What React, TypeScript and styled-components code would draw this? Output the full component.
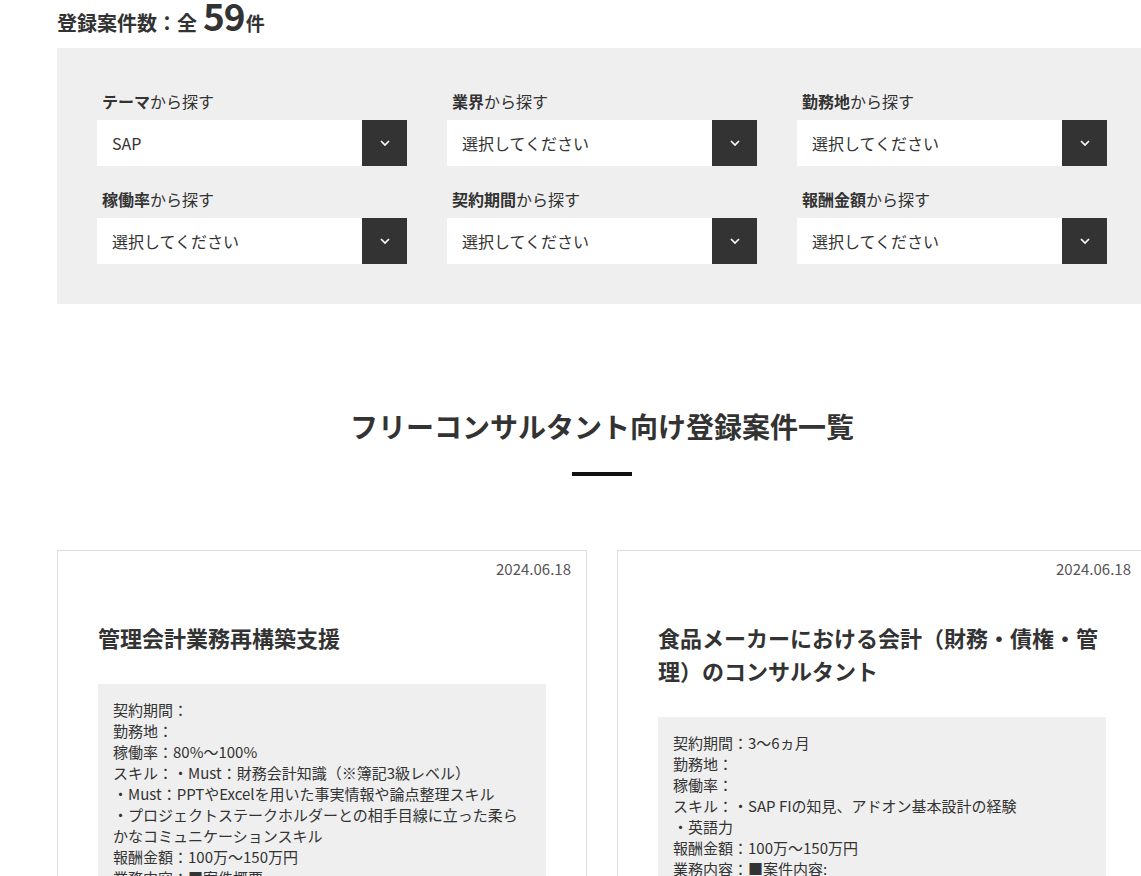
import React from "react";
import styled, { createGlobalStyle } from "styled-components";

const Global = createGlobalStyle`
  html, body { margin: 0; padding: 0; overflow-x: hidden; background: #fff; }
  body {
    font-family: "Noto Sans CJK JP", "Noto Sans", sans-serif;
    color: #333;
  }
  * { box-sizing: border-box; }
`;

const Container = styled.div`
  width: 1090px;
  margin-left: 57px;
`;

const CountHeader = styled.h2`
  margin: 0;
  height: 48px;
  font-size: 20px;
  line-height: 31px;
  font-weight: 700;
  color: #333;
`;

const CountNum = styled.span`
  font-size: 37px;
  letter-spacing: -1px;
  margin: 0 1px 0 6px;
`;

const CountUnit = styled.span`
  font-size: 19px;
`;

const SearchPanel = styled.div`
  background: #efefef;
  padding: 42px 40px 40px;
  display: grid;
  grid-template-columns: repeat(3, 310px);
  column-gap: 40px;
  row-gap: 22px;
`;

const Field = styled.div`
  display: flex;
  flex-direction: column;
`;

const FieldLabel = styled.div`
  font-size: 16px;
  line-height: 24px;
  margin: -1px 0 7px 5px;
  color: #333;
  b { font-weight: 700; }
`;

const SelectBox = styled.div`
  display: flex;
  height: 46px;
  background: #fff;
`;

const SelectValue = styled.div`
  flex: 1;
  display: flex;
  align-items: center;
  padding-left: 15px;
  font-size: 16px;
  color: #333;
`;

const SelectButton = styled.div`
  width: 45px;
  background: #333;
  display: flex;
  align-items: center;
  justify-content: center;
`;

const SectionTitle = styled.h2`
  margin: 101px 0 0;
  text-align: center;
  font-size: 28px;
  line-height: 42px;
  font-weight: 700;
  color: #333;
`;

const TitleBar = styled.div`
  width: 60px;
  height: 4px;
  background: #111;
  margin: 25px auto 0;
`;

const CardGrid = styled.div`
  margin-top: 74px;
  display: grid;
  grid-template-columns: 530px 530px;
  column-gap: 30px;
  align-items: start;
`;

const Card = styled.article`
  border: 1px solid #ddd;
  padding: 7px 40px 40px;
  background: #fff;
`;

const CardDate = styled.div`
  text-align: right;
  margin-right: -25px;
  font-size: 15px;
  line-height: 22px;
  color: #555;
`;

const CardTitle = styled.h3`
  margin: 41px 0 0;
  font-size: 22px;
  line-height: 33px;
  font-weight: 700;
  color: #333;
`;

const CardBody = styled.div`
  margin-top: 30px;
  background: #efefef;
  padding: 15px;
  font-size: 15px;
  line-height: 21px;
  color: #333;
  white-space: pre-wrap;
`;

const Chevron = () => (
  <svg width="10" height="6" viewBox="0 0 10 6" fill="none">
    <path d="M1 1l4 4 4-4" stroke="#fff" strokeWidth="1.7" />
  </svg>
);

const fields = [
  { bold: "テーマ", value: "SAP" },
  { bold: "業界", value: "選択してください" },
  { bold: "勤務地", value: "選択してください" },
  { bold: "稼働率", value: "選択してください" },
  { bold: "契約期間", value: "選択してください" },
  { bold: "報酬金額", value: "選択してください" },
];

const cards = [
  {
    date: "2024.06.18",
    title: "管理会計業務再構築支援",
    body:
      "契約期間：\n勤務地：\n稼働率：80%〜100%\nスキル：・Must：財務会計知識（※簿記3級レベル）\n・Must：PPTやExcelを用いた事実情報や論点整理スキル\n・プロジェクトステークホルダーとの相手目線に立った柔らかなコミュニケーションスキル\n報酬金額：100万〜150万円\n業務内容：■案件概要\n管理会計業務の再構築支援",
  },
  {
    date: "2024.06.18",
    title: "食品メーカーにおける会計（財務・債権・管理）のコンサルタント",
    body:
      "契約期間：3〜6ヵ月\n勤務地：\n稼働率：\nスキル：・SAP FIの知見、アドオン基本設計の経験\n・英語力\n報酬金額：100万〜150万円\n業務内容：■案件内容:\n会計領域のコンサルティング",
  },
];

export default function App() {
  return (
    <>
      <Global />
      <Container>
        <CountHeader>
          登録案件数：全<CountNum>59</CountNum>
          <CountUnit>件</CountUnit>
        </CountHeader>
        <SearchPanel>
          {fields.map((f) => (
            <Field key={f.bold}>
              <FieldLabel>
                <b>{f.bold}</b>から探す
              </FieldLabel>
              <SelectBox>
                <SelectValue>{f.value}</SelectValue>
                <SelectButton>
                  <Chevron />
                </SelectButton>
              </SelectBox>
            </Field>
          ))}
        </SearchPanel>
        <SectionTitle>フリーコンサルタント向け登録案件一覧</SectionTitle>
        <TitleBar />
        <CardGrid>
          {cards.map((c) => (
            <Card key={c.title}>
              <CardDate>{c.date}</CardDate>
              <CardTitle>{c.title}</CardTitle>
              <CardBody>{c.body}</CardBody>
            </Card>
          ))}
        </CardGrid>
      </Container>
    </>
  );
}
